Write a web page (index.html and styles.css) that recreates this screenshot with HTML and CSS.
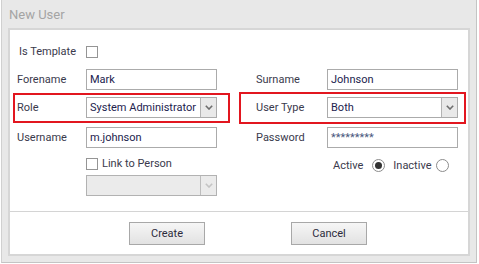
FILE: index.html
```html
<!DOCTYPE html>
<html lang="en">
<head>
  <meta charset="UTF-8" />
  <title>New User</title>
  <link rel="stylesheet" href="styles.css">
</head>
<body>

  <div class="window">
    <div class="title">New User</div>

    <div class="panel">
      <div class="form">
        <span class="lbl c1 lbl-template">Is Template</span>
        <span class="check c2 check-top"></span>

        <span class="lbl c1">Forename</span>
        <div class="field c2">Mark</div>
        <span class="lbl c4">Surname</span>
        <div class="field c5">Johnson</div>

        <span class="lbl c1">Role</span>
        <div class="field select c2">
          <span class="val">System Administrator</span>
          <span class="drop">
            <svg width="8" height="5" viewBox="0 0 8 5"><path d="M0.8 0.8 L4 4 L7.2 0.8" fill="none" stroke="#6e6e6e" stroke-width="1.6"/></svg>
          </span>
        </div>
        <span class="lbl c4">User Type</span>
        <div class="field select c5">
          <span class="val">Both</span>
          <span class="drop">
            <svg width="8" height="5" viewBox="0 0 8 5"><path d="M0.8 0.8 L4 4 L7.2 0.8" fill="none" stroke="#6e6e6e" stroke-width="1.6"/></svg>
          </span>
        </div>

        <span class="lbl c1">Username</span>
        <div class="field c2">m.johnson</div>
        <span class="lbl c4">Password</span>
        <div class="field c5 pwd">*********</div>

        <div class="link c2">
          <span class="check"></span>
          <span>Link to Person</span>
        </div>
        <div class="status c45">
          <span>Active</span>
          <span class="radio on"></span>
          <span class="inactive">Inactive</span>
          <span class="radio"></span>
        </div>

        <div class="field select disabled c2">
          <span class="val"></span>
          <span class="drop">
            <svg width="8" height="5" viewBox="0 0 8 5"><path d="M0.8 0.8 L4 4 L7.2 0.8" fill="none" stroke="#c4c4c4" stroke-width="1.6"/></svg>
          </span>
        </div>
      </div>

      <div class="actions">
        <button class="btn">Create</button>
        <button class="btn">Cancel</button>
      </div>

      <!-- red highlight boxes -->
      <div class="mark mark-role"></div>
      <div class="mark mark-type"></div>
    </div>
  </div>

</body>
</html>
```

FILE: styles.css
```css
/* ---------------- GENERAL ---------------- */
html, body {
  margin: 0;
  height: 100%;
  background: #ffffff;
  font-family: Roboto, "Liberation Sans", sans-serif;
  font-size: 11px;
  color: #3a3a4c;
  overflow: hidden;
}

.window {
  box-sizing: border-box;
  margin-left: 1px;
  width: 476px;
  height: 263px;
  background: #e8e8e8;
  border-left: 1px solid #d0d0d0;
  border-right: 1px solid #c4c4c4;
  border-bottom: 1px solid #c4c4c4;
}

.title {
  height: 28px;
  padding-left: 7px;
  line-height: 29px;
  font-size: 13px;
  color: #a4a4a4;
}

.panel {
  position: relative;
  box-sizing: border-box;
  margin-left: 6px;
  width: 462px;
  height: 228px;
  background: #ffffff;
  border: 2px solid #d6d6d6;
}

/* ---------------- FORM GRID ---------------- */
.form {
  display: grid;
  grid-template-columns: 69px 131px 39px 71px 131px;
  grid-template-rows: 28px 28px 30px 28px 20px 21px;
  padding: 11px 0 0 7px;
  height: 182px;
  box-sizing: border-box;
  border-bottom: 1px solid #d4d4d4;
  align-items: start;
}

.c1 { grid-column: 1; }
.c2 { grid-column: 2; }
.c4 { grid-column: 4; }
.c5 { grid-column: 5; }
.c45 { grid-column: 4 / 6; }

.lbl {
  line-height: 21px;
}

.lbl-template {
  padding-left: 2px;
}

.field {
  box-sizing: border-box;
  height: 21px;
  border: 1px solid #ababab;
  padding-left: 3px;
  line-height: 19px;
  color: #22224e;
  white-space: nowrap;
  overflow: hidden;
}

.pwd {
  color: #4a587e;
}

.select {
  display: flex;
  padding-left: 0;
}

.select .val {
  flex: 1;
  padding-left: 3px;
}

.select .drop {
  width: 15px;
  border-left: 1px solid #b4b4b4;
  background: #e9e9e9;
  display: flex;
  align-items: center;
  justify-content: center;
}

.disabled {
  background: #ebebeb;
  border-color: #b2b2b2;
}

.disabled .drop {
  background: #ebebeb;
  border-left-color: #bdbdbd;
}

/* ---------------- CHECKS & RADIOS ---------------- */
.check {
  display: inline-block;
  box-sizing: border-box;
  width: 12px;
  height: 12px;
  border: 1px solid #959595;
  background: #fff;
}

.check-top {
  margin-top: 5px;
}

.link {
  display: flex;
  align-items: center;
  gap: 4px;
  margin-top: 3px;
  line-height: 12px;
}

.status {
  display: flex;
  align-items: center;
  padding-left: 77px;
  margin-top: 4px;
  line-height: 13px;
}

.radio {
  position: relative;
  box-sizing: border-box;
  width: 13px;
  height: 13px;
  border: 1px solid #8c8c8c;
  border-radius: 50%;
  margin-left: 9px;
}

.status .inactive {
  margin-left: 8px;
}

.status .inactive + .radio {
  margin-left: 4px;
}

.radio.on::after {
  content: "";
  position: absolute;
  left: 2px;
  top: 2px;
  width: 7px;
  height: 7px;
  border-radius: 50%;
  background: #333333;
}

/* ---------------- BUTTONS ---------------- */
.actions {
  display: flex;
  gap: 86px;
  padding: 10px 0 0 119px;
}

.btn {
  box-sizing: border-box;
  width: 76px;
  height: 23px;
  margin: 0;
  padding: 0;
  border: 1px solid #a8a8a8;
  background: linear-gradient(#f6f6f6, #e2e2e2);
  font-family: Roboto, "Liberation Sans", sans-serif;
  font-size: 11px;
  color: #2c2c3c;
}

/* ---------------- RED HIGHLIGHTS ---------------- */
.mark {
  position: absolute;
  box-sizing: border-box;
  border: 2px solid #e2161f;
}

.mark-role {
  left: 3px;
  top: 63px;
  width: 217px;
  height: 30px;
}

.mark-type {
  left: 229px;
  top: 62px;
  width: 227px;
  height: 32px;
}
```
